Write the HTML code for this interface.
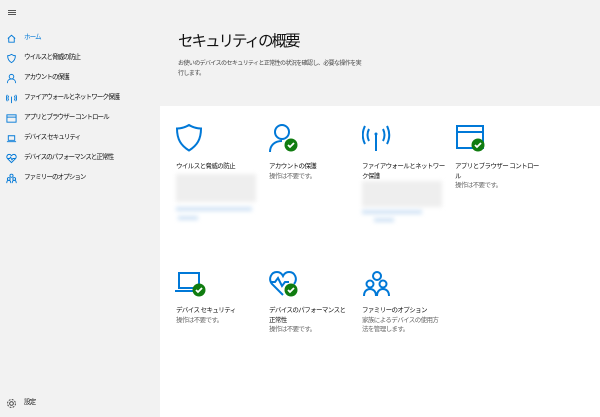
<!DOCTYPE html><html><head><meta charset="utf-8"><style>
*{margin:0;padding:0;box-sizing:border-box}
body{width:600px;height:417px;overflow:hidden;background:#fff;font-family:"Liberation Sans","Noto Sans CJK JP",sans-serif;position:relative;color:#000}
.side{position:absolute;left:0;top:0;width:160px;height:417px;background:#f2f2f2}
.hdr{position:absolute;left:160px;top:0;width:440px;height:106px;background:#f2f2f2}
.it{position:absolute;left:24px;font-size:6.6px;letter-spacing:-1px;line-height:10px;color:#111;white-space:nowrap}
.ic{position:absolute;left:6px;width:11px;height:11px}
.t{position:absolute;font-size:6.5px;letter-spacing:-0.6px;line-height:9.5px;color:#111;white-space:nowrap}
.s{color:#666}
.blur{position:absolute;background:#eee;filter:blur(2px)}
.blu{position:absolute;background:#cfe2f5;filter:blur(2px)}
svg{position:absolute}
</style></head><body>
<div class="side">
<div style="position:absolute;left:8px;top:10px;width:8px;height:1px;background:#555;box-shadow:0 2px #555,0 4px #555"></div>
<svg class="ic" style="top:33px" viewBox="0 0 12 12"><path d="M2 6L6 2.5 10 6M3 5.5V10h6V5.5" fill="none" stroke="#0078d7"/></svg>
<div class="it" style="top:33px;color:#0078d7">ホーム</div>
<svg class="ic" style="top:53px" viewBox="0 0 12 12"><path d="M6 1.5C4.5 2.5 3 3 1.8 3c0 4 1.5 6 4.2 7.5C8.7 9 10.2 7 10.2 3 9 3 7.5 2.5 6 1.5z" fill="none" stroke="#0078d7"/></svg>
<div class="it" style="top:53px">ウイルスと脅威の防止</div>
<svg class="ic" style="top:73px" viewBox="0 0 12 12"><circle cx="6" cy="4" r="2.5" fill="none" stroke="#0078d7"/><path d="M1.5 11c0-3 2-4.5 4.5-4.5S10.5 8 10.5 11" fill="none" stroke="#0078d7"/></svg>
<div class="it" style="top:73px">アカウントの保護</div>
<svg class="ic" style="top:93px" viewBox="0 0 12 12"><path d="M6 4v7M3 3c-1 1.5-1 3.5 0 5M9 3c1 1.5 1 3.5 0 5M1.5 2c-1.5 2-1.5 5 0 7M10.5 2c1.5 2 1.5 5 0 7" fill="none" stroke="#0078d7"/></svg>
<div class="it" style="top:93px">ファイアウォールとネットワーク保護</div>
<svg class="ic" style="top:113px" viewBox="0 0 12 12"><rect x="1" y="2" width="10" height="8" fill="none" stroke="#0078d7"/><path d="M1 4.5h10" stroke="#0078d7"/></svg>
<div class="it" style="top:113px">アプリとブラウザー コントロール</div>
<svg class="ic" style="top:133px" viewBox="0 0 12 12"><path d="M2.5 3h7v5h-7zM1 9.5h10" fill="none" stroke="#0078d7"/></svg>
<div class="it" style="top:133px">デバイス セキュリティ</div>
<svg class="ic" style="top:153px" viewBox="0 0 12 12"><path d="M6 10.5L1.5 6C0 4 1.5 1.5 3.5 1.5 4.7 1.5 5.5 2.3 6 3c.5-.7 1.3-1.5 2.5-1.5 2 0 3.5 2.5 2 4.5z M2 6h2l1-1.5 1.5 3L7.5 6H10" fill="none" stroke="#0078d7"/></svg>
<div class="it" style="top:153px">デバイスのパフォーマンスと正常性</div>
<svg class="ic" style="top:173px" viewBox="0 0 12 12"><circle cx="6" cy="3" r="1.7" fill="none" stroke="#0078d7"/><circle cx="3" cy="6.5" r="1.5" fill="none" stroke="#0078d7"/><circle cx="9" cy="6.5" r="1.5" fill="none" stroke="#0078d7"/><path d="M.8 11c0-2 1-3 2.2-3s2.2 1 2.2 3M6.8 11c0-2 1-3 2.2-3s2.2 1 2.2 3" fill="none" stroke="#0078d7"/></svg>
<div class="it" style="top:173px">ファミリーのオプション</div>
<svg class="ic" style="top:398px" viewBox="0 0 12 12"><circle cx="6" cy="6" r="2" fill="none" stroke="#333"/><circle cx="6" cy="6" r="4.3" fill="none" stroke="#333" stroke-dasharray="2 1.4"/></svg>
<div class="it" style="top:398px">設定</div>
</div>
<div class="hdr">
<div style="position:absolute;left:18px;top:31px;font-size:15.5px;letter-spacing:-2px;line-height:22px;color:#111;white-space:nowrap">セキュリティの概要</div>
<div style="position:absolute;left:18px;top:59px;font-size:6px;letter-spacing:-0.6px;line-height:10px;color:#444;white-space:nowrap">お使いのデバイスのセキュリティと正常性の状況を確認し、必要な操作を実<br>行します。</div>
</div>
<svg style="left:174px;top:123px" width="32" height="30" viewBox="0 0 32 30"><path d="M15 2C11 4.5 7 5.5 3 5.5c0 11 4 17 12 22 8-5 12-11 12-22-4 0-8-1-12-3.5z" fill="none" stroke="#0078d7" stroke-width="2"/></svg>
<div class="t" style="left:176px;top:162px">ウイルスと脅威の防止</div>
<div class="blur" style="left:176px;top:174px;width:80px;height:28px"></div>
<div class="blu" style="left:176px;top:207px;width:76px;height:4px"></div>
<div class="blu" style="left:178px;top:216px;width:20px;height:4px"></div>
<svg style="left:268px;top:123px" width="34" height="30" viewBox="0 0 34 30"><circle cx="14" cy="9" r="7" fill="none" stroke="#0078d7" stroke-width="2"/><path d="M2 29c0-7 5-11 12-11" fill="none" stroke="#0078d7" stroke-width="2"/><circle cx="23" cy="22" r="6.5" fill="#107c10"/><path d="M20 22l2 2 4-4" fill="none" stroke="#fff" stroke-width="1.8"/></svg>
<div class="t" style="left:269px;top:162px">アカウントの保護<br><span class="s">操作は不要です。</span></div>
<svg style="left:362px;top:124px" width="30" height="28" viewBox="0 0 30 28"><path d="M14 9v18M7 5c-2 4-2 8 0 12M21 5c2 4 2 8 0 12M3 2c-3 6-3 12 0 18M25 2c3 6 3 12 0 18" fill="none" stroke="#0078d7" stroke-width="2"/><circle cx="14" cy="10" r="1.5" fill="#0078d7"/></svg>
<div class="t" style="left:362px;top:162px">ファイアウォールとネットワー<br>ク保護</div>
<div class="blur" style="left:362px;top:181px;width:80px;height:26px"></div>
<div class="blu" style="left:362px;top:210px;width:60px;height:4px"></div>
<div class="blu" style="left:374px;top:218px;width:20px;height:4px"></div>
<svg style="left:455px;top:124px" width="32" height="30" viewBox="0 0 32 30"><rect x="2" y="2" width="26" height="22" fill="none" stroke="#0078d7" stroke-width="2"/><path d="M2 8h26" stroke="#0078d7" stroke-width="2"/><circle cx="23" cy="21" r="6.5" fill="#107c10"/><path d="M20 21l2 2 4-4" fill="none" stroke="#fff" stroke-width="1.8"/></svg>
<div class="t" style="left:455px;top:162px">アプリとブラウザー コントロー<br>ル<br><span class="s">操作は不要です。</span></div>
<svg style="left:174px;top:270px" width="34" height="28" viewBox="0 0 34 28"><path d="M5 3h20v15H5zM1 21h18" fill="none" stroke="#0078d7" stroke-width="2"/><circle cx="25" cy="20" r="6.5" fill="#107c10"/><path d="M22 20l2 2 4-4" fill="none" stroke="#fff" stroke-width="1.8"/></svg>
<div class="t" style="left:176px;top:306px">デバイス セキュリティ<br><span class="s">操作は不要です。</span></div>
<svg style="left:268px;top:270px" width="34" height="28" viewBox="0 0 34 28"><path d="M15 25L4 14C0 9 3 2 9 2c3 0 5 2 6 4 1-2 3-4 6-4 6 0 9 7 5 12M2 12h5l3-4 4 8 3-4h4" fill="none" stroke="#0078d7" stroke-width="2"/><circle cx="23" cy="20" r="6.5" fill="#107c10"/><path d="M20 20l2 2 4-4" fill="none" stroke="#fff" stroke-width="1.8"/></svg>
<div class="t" style="left:269px;top:306px">デバイスのパフォーマンスと<br>正常性<br><span class="s">操作は不要です。</span></div>
<svg style="left:362px;top:270px" width="30" height="28" viewBox="0 0 30 28"><circle cx="15" cy="6" r="4" fill="none" stroke="#0078d7" stroke-width="2"/><circle cx="8" cy="14" r="3.5" fill="none" stroke="#0078d7" stroke-width="2"/><circle cx="21" cy="14" r="3.5" fill="none" stroke="#0078d7" stroke-width="2"/><path d="M2 26c0-5 3-7 6-7s6 2 6 7M15 26c0-5 3-7 6-7s6 2 6 7" fill="none" stroke="#0078d7" stroke-width="2"/></svg>
<div class="t" style="left:362px;top:306px">ファミリーのオプション<br><span class="s">家族によるデバイスの使用方<br>法を管理します。</span></div>
</body></html>
